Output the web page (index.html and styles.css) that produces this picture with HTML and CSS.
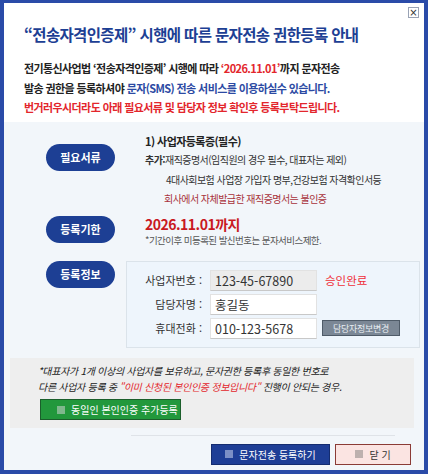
FILE: index.html
```html
<!DOCTYPE html>
<html lang="ko">
<head>
    <meta charset="UTF-8">
    <meta name="viewport" content="width=device-width, initial-scale=1.0">
    <title>문자전송 권한등록 안내</title>
    <link rel="stylesheet" href="styles.css">
</head>
<body>
    <div class="popup">
        <button class="close-btn" type="button">&times;</button>

        <div class="intro">
            <h1>“전송자격인증제” 시행에 따른 문자전송 권한등록 안내</h1>
            <p>전기통신사업법 ‘전송자격인증제’ 시행에 따라 <span class="red">‘2026.11.01’</span>까지 문자전송</p>
            <p>발송 권한을 등록하셔야 <span class="blue">문자(SMS) 전송 서비스를 이용하실수 있습니다.</span></p>
            <p class="red">번거러우시더라도 아래 필요서류 및 담당자 정보 확인후 등록부탁드립니다.</p>
        </div>

        <div class="content">
            <div class="row row-docs">
                <div class="pill pill-docs">필요서류</div>
                <div class="row-text">
                    <div class="doc-main">1) 사업자등록증(필수)</div>
                    <div><b>추가:</b>재직증명서(임직원의 경우 필수, 대표자는 제외)</div>
                    <div class="indent">4대사회보험 사업장 가입자 명부,건강보험 자격확인서등</div>
                    <div class="warn">회사에서 자체발급한 재직증명서는 불인증</div>
                </div>
            </div>

            <div class="row row-date">
                <div class="pill pill-date">등록기한</div>
                <div class="row-text">
                    <div class="deadline">2026.11.01까지</div>
                    <div class="small-note">*기간이후 미등록된 발신번호는 문자서비스제한.</div>
                </div>
            </div>

            <div class="row">
                <div class="pill">등록정보</div>
                <div class="info-box">
                    <div class="field">
                        <label>사업자번호 :</label>
                        <input type="text" class="readonly" value="123-45-67890" readonly>
                        <span class="status">승인완료</span>
                    </div>
                    <div class="field">
                        <label>담당자명 :</label>
                        <input type="text" value="홍길동">
                    </div>
                    <div class="field">
                        <label>휴대전화 :</label>
                        <input type="text" value="010-123-5678">
                        <button type="button" class="btn-change">담당자정보변경</button>
                    </div>
                </div>
            </div>

            <div class="notice">
                <p>*대표자가 1개 이상의 사업자를 보유하고, 문자권한 등록후 동일한 번호로</p>
                <p>다른 사업자 등록 중 <span class="red">"이미 신청된 본인인증 정보입니다"</span> 진행이 안되는 경우.</p>
                <button type="button" class="btn btn-green"><i class="sq"></i>동일인 본인인증 추가등록</button>
            </div>

            <div class="divider"></div>
            <div class="footer">
                <button type="button" class="btn btn-submit"><i class="sq"></i>문자전송 등록하기</button>
                <button type="button" class="btn btn-close"><i class="sq"></i>닫 기</button>
            </div>
        </div>
    </div>
</body>
</html>
```

FILE: styles.css
```css
:root {
    --frame-blue: #2a4ba8;
    --navy: #1d3f94;
    --red: #e3262c;
    --text: #222;
    --panel: #f2f6fa;
}

* {
    margin: 0;
    padding: 0;
    box-sizing: border-box;
}

body {
    font-family: "Noto Sans CJK KR", "Noto Sans", sans-serif;
    color: var(--text);
    background: #fff;
}

.popup {
    position: relative;
    width: 428px;
    height: 474px;
    border: 4px solid var(--frame-blue);
    border-top-width: 3px;
    display: flex;
    flex-direction: column;
    background: #fff;
}

.close-btn {
    position: absolute;
    top: 4px;
    right: 5px;
    width: 11px;
    height: 11px;
    border: 1px solid #9aa3b5;
    background: #fff;
    color: #333;
    font-size: 10px;
    line-height: 8px;
    font-family: "DejaVu Sans", sans-serif;
    cursor: pointer;
}

/* intro */
.intro {
    flex: none;
    padding: 20px 20px 0;
    height: 119px;
}

.intro h1 {
    font-size: 15.5px;
    font-weight: 700;
    color: var(--navy);
    letter-spacing: -0.65px;
    margin-bottom: 14px;
}

.intro p {
    font-size: 11px;
    font-weight: 700;
    line-height: 19.5px;
    letter-spacing: -0.6px;
}

.red {
    color: var(--red);
}

.blue {
    color: #2c4aa3;
}

/* content */
.content {
    flex: 1;
    background: var(--panel);
    padding-top: 11px;
}

.row {
    display: flex;
    align-items: flex-start;
    padding-left: 42px;
    margin-bottom: 10px;
}

.row-docs {
    margin-bottom: 6px;
}

.row-date {
    margin-bottom: 14px;
}

.pill {
    flex: none;
    width: 69px;
    height: 27px;
    border-radius: 14px;
    background: var(--navy);
    color: #fff;
    font-size: 11px;
    font-weight: 700;
    text-align: center;
    line-height: 27px;
    margin-right: 11px;
}

.pill-docs {
    margin-top: 11px;
}

.pill-date {
    margin-top: 1px;
}

.row-text {
    padding-left: 19px;
    font-size: 10px;
    line-height: 19.5px;
    letter-spacing: -0.55px;
    color: #333;
}

.doc-main {
    font-size: 11px;
    font-weight: 700;
    color: #222;
    line-height: 17px;
}

.indent {
    padding-left: 21px;
}

.warn {
    color: #a8323a;
    padding-left: 19px;
}

.deadline {
    font-size: 14px;
    font-weight: 700;
    color: #c9191f;
    line-height: 18px;
    letter-spacing: -0.5px;
}

.small-note {
    font-size: 9.5px;
    color: #555;
    line-height: 14px;
}

/* info box */
.info-box {
    width: 294px;
    height: 87px;
    background: #eef5fc;
    border: 1px solid #dbe3ea;
    padding: 8px 0 0 8px;
}

.field {
    display: flex;
    align-items: center;
    height: 21px;
    margin-bottom: 3px;
}

.field label {
    width: 67px;
    text-align: right;
    font-size: 11px;
    color: #333;
    margin-right: 8px;
}

.field input {
    flex: none;
    width: 107px;
    height: 21px;
    border: 1px solid #e2e2e2;
    border-bottom-color: #c8c8c8;
    background: #fff;
    font-family: "Noto Sans CJK KR", "Noto Sans", sans-serif;
    font-size: 12.5px;
    color: #333;
    padding: 0 4px;
}

.field input.readonly {
    background: #ececec;
}

.status {
    margin-left: 8px;
    font-size: 11.5px;
    color: #f0303a;
}

.btn-change {
    margin-left: 5px;
    width: 78px;
    height: 16px;
    background: #7b8795;
    border: 1px solid #4f5b68;
    color: #e8edf2;
    font-family: "Noto Sans CJK KR", sans-serif;
    font-size: 9px;
    letter-spacing: -0.3px;
}

/* notice */
.notice {
    margin: 4px 10px 0 6px;
    height: 70px;
    background: #eeeeee;
    padding: 5px 0 0 28px;
}

.notice p {
    font-size: 10px;
    font-style: italic;
    line-height: 16px;
    color: #222;
    letter-spacing: -0.3px;
}

.btn {
    display: inline-flex;
    align-items: center;
    justify-content: center;
    font-family: "Noto Sans CJK KR", sans-serif;
    font-size: 10px;
    cursor: pointer;
}

.sq {
    display: inline-block;
    width: 8px;
    height: 8px;
    margin-right: 6px;
}

.btn-green {
    margin: 3px 0 0 2px;
    width: 141px;
    height: 21px;
    background: #22983c;
    border: 1px solid #1b5e2b;
    color: #fff;
    justify-content: flex-start;
    padding-left: 16px;
}

.btn-green .sq {
    background: #7fb88d;
}

/* footer */
.divider {
    margin: 7px 29px 0 127px;
    border-top: 1px solid #dfe3e8;
}

.footer {
    display: flex;
    justify-content: flex-end;
    gap: 5px;
    padding: 8px 13px 0 0;
}

.footer .btn {
    height: 21px;
}

.btn-submit {
    width: 119px;
    background: #1e3e96;
    border: 1px solid #142c70;
    color: #fff;
}

.btn-submit .sq {
    background: #7b8fc6;
}

.btn-close {
    width: 76px;
    background: #fbe4e2;
    border: 1px solid #8b3b36;
    color: #333;
}

.btn-close .sq {
    background: #bdb0ae;
}
```
